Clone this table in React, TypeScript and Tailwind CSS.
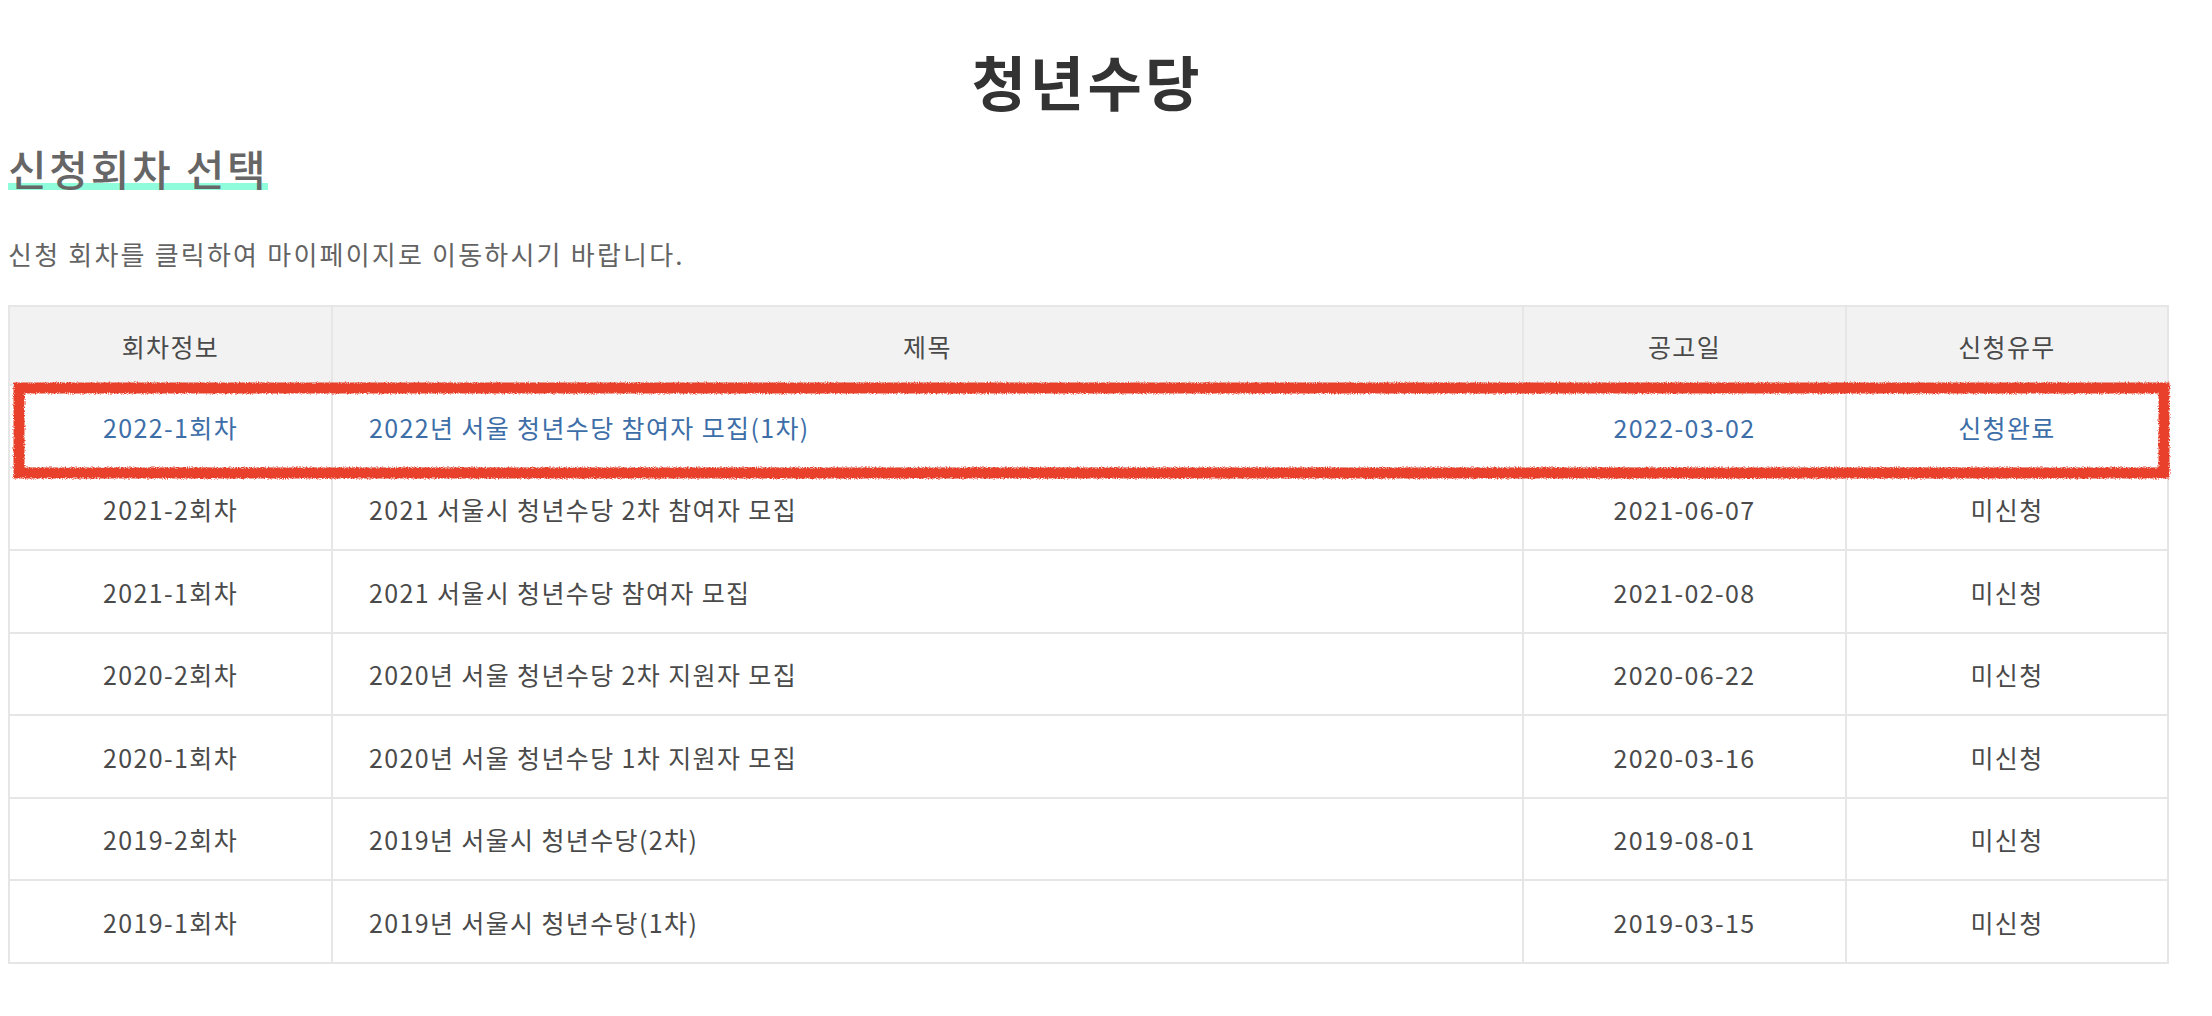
import React from 'react';

interface Round {
  id: string;
  title: string;
  date: string;
  status: string;
  applied?: boolean;
}

const rounds: Round[] = [
  { id: '2022-1회차', title: '2022년 서울 청년수당 참여자 모집(1차)', date: '2022-03-02', status: '신청완료', applied: true },
  { id: '2021-2회차', title: '2021 서울시 청년수당 2차 참여자 모집', date: '2021-06-07', status: '미신청' },
  { id: '2021-1회차', title: '2021 서울시 청년수당 참여자 모집', date: '2021-02-08', status: '미신청' },
  { id: '2020-2회차', title: '2020년 서울 청년수당 2차 지원자 모집', date: '2020-06-22', status: '미신청' },
  { id: '2020-1회차', title: '2020년 서울 청년수당 1차 지원자 모집', date: '2020-03-16', status: '미신청' },
  { id: '2019-2회차', title: '2019년 서울시 청년수당(2차)', date: '2019-08-01', status: '미신청' },
  { id: '2019-1회차', title: '2019년 서울시 청년수당(1차)', date: '2019-03-15', status: '미신청' },
];

// hand-drawn marker box that sits over the first row
const MarkerBox: React.FC = () => (
  <svg
    className="absolute left-[5px] top-[77px] pointer-events-none overflow-visible"
    width="2157"
    height="97"
    viewBox="0 0 2157 97"
  >
    <defs>
      <filter id="rough" x="-2%" y="-20%" width="104%" height="140%">
        <feTurbulence type="fractalNoise" baseFrequency="0.9" numOctaves="2" seed="3" result="noise" />
        <feDisplacementMap in="SourceGraphic" in2="noise" scale="4" xChannelSelector="R" yChannelSelector="G" />
      </filter>
    </defs>
    <rect x="6" y="6" width="2145" height="85" fill="none" stroke="#e8412a" strokeWidth="11" filter="url(#rough)" />
  </svg>
);

const App: React.FC = () => {
  return (
    <div className="min-h-screen bg-white font-['Noto_Sans_CJK_KR','Noto_Sans',sans-serif]">
      <div className="ml-[8px] w-[2159px] pt-[46px] pb-[40px]">
        <h1 className="text-center text-[59px] leading-[1.2] font-bold tracking-[0.06em] text-[#333333]">청년수당</h1>

        <h2 className="mt-[26px] text-[42px] leading-[1.2] font-medium tracking-[0.065em] text-[#666666]">
          <span className="relative isolate inline-block">
            <span className="absolute left-0 right-0 bottom-[3px] h-[7px] bg-[#8ffcdc] -z-10" />
            신청회차 선택
          </span>
        </h2>

        <p className="mt-[45px] text-[26px] leading-[1.2] tracking-[0.085em] text-[#636363]">
          신청 회차를 클릭하여 마이페이지로 이동하시기 바랍니다.
        </p>

        <div className="relative mt-[36px]">
          <table className="w-full table-fixed border-collapse text-[25px] leading-[1.2] tracking-[0.055em]">
            <colgroup>
              <col className="w-[323px]" />
              <col className="w-[1191px]" />
              <col className="w-[323px]" />
              <col className="w-[322px]" />
            </colgroup>
            <thead>
              <tr className="h-[79px] bg-[#f2f2f2] text-[#4a4a4a]">
                <th className="border-2 border-[#e6e6e6] font-normal">회차정보</th>
                <th className="border-2 border-[#e6e6e6] font-normal">제목</th>
                <th className="border-2 border-[#e6e6e6] font-normal">공고일</th>
                <th className="border-2 border-[#e6e6e6] font-normal">신청유무</th>
              </tr>
            </thead>
            <tbody>
              {rounds.map((r) => (
                <tr key={r.id} className={`h-[82.5px] ${r.applied ? 'text-[#3d6ea8]' : 'text-[#4a4a4a]'}`}>
                  <td className="border-2 border-[#e6e6e6] text-center">{r.id}</td>
                  <td className="border-2 border-[#e6e6e6] pl-[36px]">{r.title}</td>
                  <td className="border-2 border-[#e6e6e6] text-center">{r.date}</td>
                  <td className="border-2 border-[#e6e6e6] text-center">{r.status}</td>
                </tr>
              ))}
            </tbody>
          </table>
          <MarkerBox />
        </div>
      </div>
    </div>
  );
};

export default App;
